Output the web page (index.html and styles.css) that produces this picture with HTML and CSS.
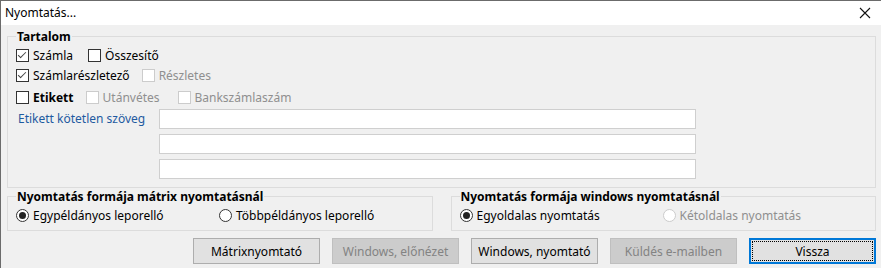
FILE: index.html
```html
<!DOCTYPE html>
<html lang="hu">
<head>
<meta charset="UTF-8">
<title>Nyomtatás...</title>
<link rel="stylesheet" href="styles.css">
</head>
<body>
<div class="window">
    <div class="titlebar">
        <span class="title">Nyomtatás...</span>
        <svg class="close" width="12" height="12" viewBox="0 0 12 12">
            <path d="M1 1 L11 11 M11 1 L1 11" stroke="#111" stroke-width="1.1" fill="none"/>
        </svg>
    </div>

    <div class="content">
        <fieldset class="group group-main">
            <legend>Tartalom</legend>

            <div class="row">
                <label class="chk"><span class="box checked"></span>Számla</label>
                <label class="chk chk-osszesito"><span class="box"></span>Összesítő</label>
            </div>
            <div class="row">
                <label class="chk"><span class="box checked"></span>Számlarészletező</label>
                <label class="chk chk-reszletes disabled"><span class="box"></span>Részletes</label>
            </div>
            <div class="row row-last">
                <label class="chk"><span class="box"></span><b>Etikett</b></label>
                <label class="chk chk-utanvetes disabled"><span class="box"></span>Utánvétes</label>
                <label class="chk chk-bank disabled"><span class="box"></span>Bankszámlaszám</label>
            </div>

            <div class="free-text">
                <span class="free-label">Etikett kötetlen szöveg</span>
                <div class="inputs">
                    <input type="text">
                    <input type="text">
                    <input type="text">
                </div>
            </div>
        </fieldset>

        <div class="groups">
            <fieldset class="group">
                <legend>Nyomtatás formája mátrix nyomtatásnál</legend>
                <div class="radios">
                    <label class="rad"><span class="dot checked"></span>Egypéldányos leporelló</label>
                    <label class="rad"><span class="dot"></span>Többpéldányos leporelló</label>
                </div>
            </fieldset>
            <fieldset class="group">
                <legend>Nyomtatás formája windows nyomtatásnál</legend>
                <div class="radios">
                    <label class="rad"><span class="dot checked"></span>Egyoldalas nyomtatás</label>
                    <label class="rad disabled"><span class="dot"></span>Kétoldalas nyomtatás</label>
                </div>
            </fieldset>
        </div>

        <div class="buttons">
            <button class="btn">Mátrixnyomtató</button>
            <button class="btn" disabled>Windows, előnézet</button>
            <button class="btn">Windows, nyomtató</button>
            <button class="btn" disabled>Küldés e-mailben</button>
            <button class="btn btn-default"><span>Vissza</span></button>
        </div>
    </div>
</div>
</body>
</html>
```

FILE: styles.css
```css
*, *::before, *::after {
    box-sizing: border-box;
}

body {
    margin: 0;
    background-color: #f0f0f0;
    font-family: 'Noto Sans', 'Open Sans', sans-serif;
    font-size: 12px;
    color: #000;
}

.window {
    width: 881px;
    height: 268px;
    border-left: 1px solid #6b6b6b;
    border-top: 1px solid #6b6b6b;
    overflow: hidden;
}

/* title bar */
.titlebar {
    height: 24px;
    background-color: #fff;
    display: flex;
    align-items: center;
    padding-left: 4px;
}

.title {
    flex: 1;
    line-height: 16px;
    margin-top: -1px;
}

.close {
    margin-right: 10px;
    margin-top: -1px;
}

.content {
    padding: 0 5px 0 6px;
}

/* group boxes */
.group {
    margin: 0;
    border: 1px solid #dcdcdc;
    padding: 0 8px;
}

.group legend {
    font-weight: bold;
    padding: 0 1px;
    line-height: 15px;
}

.group-main {
    margin-top: 4px;
    height: 159px;
    padding-top: 1px;
}

.row {
    display: flex;
    align-items: center;
    height: 20px;
}

.row-last {
    margin-top: 2px;
}

/* checkboxes */
.chk, .rad {
    display: inline-flex;
    align-items: center;
    gap: 4px;
    line-height: 15px;
}

.box {
    width: 13px;
    height: 13px;
    border: 1px solid #333;
    background-color: #fff;
    position: relative;
}

.box.checked::after {
    content: "";
    position: absolute;
    left: 3px;
    top: 0px;
    width: 4px;
    height: 8px;
    border-right: 1px solid #444;
    border-bottom: 1px solid #444;
    transform: rotate(45deg);
}

.disabled {
    color: #8f8f8f;
}

.disabled .box, .disabled .dot {
    border-color: #cccccc;
}

.chk-osszesito { margin-left: 15px; }
.chk-reszletes { margin-left: 12px; }
.chk-utanvetes { margin-left: 12px; }
.chk-bank { margin-left: 18px; }

/* free text rows */
.free-text {
    display: flex;
    margin-top: 2px;
}

.free-label {
    width: 143px;
    padding-left: 2px;
    color: #1e5aa0;
    line-height: 16px;
    margin-top: 2px;
}

.inputs {
    display: flex;
    flex-direction: column;
    gap: 5px;
}

.inputs input {
    width: 537px;
    height: 20px;
    margin: 0;
    border: 1px solid #cfcfcf;
    background-color: #fff;
    outline: none;
}

/* bottom groups */
.groups {
    display: flex;
    gap: 18px;
    margin-top: 1px;
}

.groups .group {
    width: 426px;
    height: 42px;
}

.radios {
    display: grid;
    grid-template-columns: 203px auto;
    margin-top: 4px;
}

.dot {
    width: 13px;
    height: 13px;
    border: 1px solid #333;
    border-radius: 50%;
    background-color: #fff;
    display: flex;
    align-items: center;
    justify-content: center;
}

.dot.checked::after {
    content: "";
    width: 7px;
    height: 7px;
    border-radius: 50%;
    background-color: #222;
}

/* buttons */
.buttons {
    display: flex;
    justify-content: flex-end;
    gap: 12px;
    margin-top: 7px;
}

.btn {
    width: 127px;
    height: 26px;
    margin: 0;
    border: 1px solid #adadad;
    background-color: #e1e1e1;
    font-family: inherit;
    font-size: 12px;
    color: #000;
    padding: 0;
}

.btn:disabled {
    background-color: #cccccc;
    border-color: #bfbfbf;
    color: #838383;
}

.btn-default {
    border: 2px solid #0078d7;
    padding: 1px;
}

.btn-default span {
    display: flex;
    align-items: center;
    justify-content: center;
    height: 100%;
    border: 1px dotted #000;
}
```
